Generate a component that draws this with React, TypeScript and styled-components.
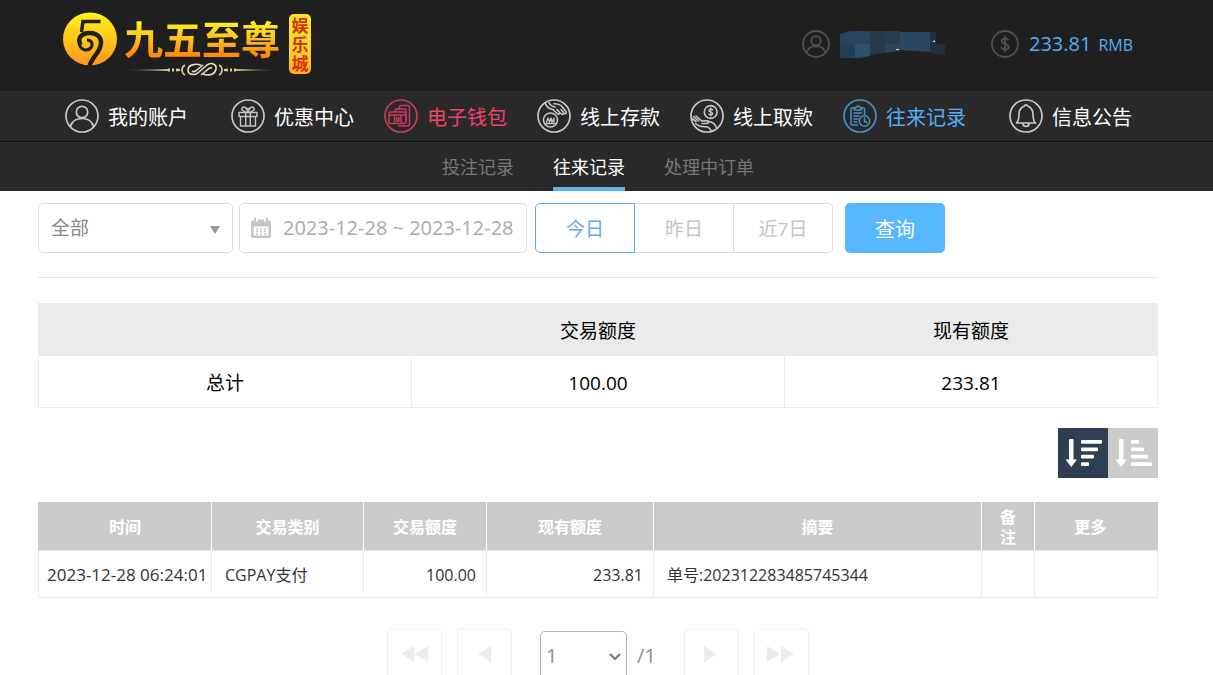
import React from "react";
import styled, { createGlobalStyle, css } from "styled-components";

const GlobalStyle = createGlobalStyle`
  html {
    scrollbar-width: none;
  }
  *, *::before, *::after {
    box-sizing: border-box;
  }
  body {
    margin: 0;
    background: #fff;
    color: #000;
    font-family: "Open Sans", "Noto Sans CJK SC", sans-serif;
    font-size: 16px;
  }
  button, input, select {
    font: inherit;
    margin: 0;
  }
`;

/* ---------- header ---------- */

const TopBar = styled.header`
  display: flex;
  align-items: center;
  justify-content: space-between;
  height: 91px;
  padding: 0 80px 0 63px;
  background: #1f1f1f;
`;

const Brand = styled.a`
  display: flex;
  align-items: flex-start;
  height: 68px;
  color: inherit;
  text-decoration: none;
`;

const BrandText = styled.div`
  display: flex;
  flex-direction: column;
  width: 160px;
  margin: 0 5px 0 7px;
`;

const BrandName = styled.span`
  font-family: "Noto Sans CJK SC", sans-serif;
  font-size: 39px;
  font-weight: 700;
  line-height: 50px;
  white-space: nowrap;
  color: transparent;
  background: linear-gradient(#fff01e 20%, #ffc81a 50%, #ff8a0c 85%);
  background-clip: text;
  -webkit-background-clip: text;
`;

const BrandBadge = styled.span`
  width: 22px;
  height: 60px;
  margin-top: 2px;
  padding: 2px;
  border-radius: 5px;
  background: linear-gradient(#ffe62e, #ffd22a 60%, #ffae20);
  color: #cf3410;
  font-size: 17px;
  font-weight: 700;
  line-height: 19px;
  text-align: center;
  word-break: break-all;
`;

const Status = styled.div`
  display: flex;
  align-items: center;
  padding-bottom: 3px;
`;

const StatusItem = styled.div`
  display: flex;
  align-items: center;
  gap: 10px;
  margin-left: 46px;
`;

const Balance = styled.span`
  color: #55adf5;
  font-size: 20px;
  line-height: 28px;

  small {
    margin-left: 7px;
    font-size: 16px;
  }
`;

/* ---------- navigation ---------- */

const NavBar = styled.nav`
  display: flex;
  align-items: center;
  justify-content: space-between;
  height: 51px;
  padding: 0 81px 0 65px;
  background: #292929;
  border-bottom: 1px solid #0e0e0e;
`;

const NavGroup = styled.div`
  display: flex;
  gap: 30px;
`;

const NavLink = styled.a<{ $color?: string; $iconColor?: string }>`
  display: flex;
  align-items: center;
  gap: 9px;
  color: ${(p) => p.$color ?? "#fff"};
  font-size: 20px;
  line-height: 30px;
  white-space: nowrap;
  text-decoration: none;

  svg {
    color: ${(p) => p.$iconColor ?? "#c8c8c8"};
  }
`;

const NavLabel = styled.span`
  padding-top: 3px;
`;

const SubNav = styled.nav`
  display: flex;
  justify-content: center;
  gap: 39px;
  height: 49px;
  padding-right: 17px;
  background: #292929;
  border-top: 1px solid #323232;
`;

const SubLink = styled.a<{ $active?: boolean }>`
  display: flex;
  align-items: center;
  padding-top: 4px;
  color: ${(p) => (p.$active ? "#fff" : "#777")};
  border-bottom: 4px solid ${(p) => (p.$active ? "#62b0f0" : "transparent")};
  font-size: 18px;
  line-height: 24px;
  text-decoration: none;
`;

/* ---------- content ---------- */

const Content = styled.main`
  padding: 12px 55px 0 38px;
`;

const Filters = styled.form`
  display: flex;
  height: 75px;
  border-bottom: 1px solid #e6e6e6;
`;

const fieldBox = css`
  height: 50px;
  border: 1px solid #dcdcdc;
  border-radius: 5px;
  background: #fff;
`;

const SelectWrap = styled.div`
  position: relative;
  width: 195px;
  height: 50px;
  margin-right: 6px;

  svg {
    position: absolute;
    right: 13px;
    top: 23px;
    pointer-events: none;
  }
`;

const TypeSelect = styled.select`
  ${fieldBox}
  width: 100%;
  padding: 0 12px;
  appearance: none;
  color: #888;
  font-size: 19px;
`;

const DateField = styled.label`
  ${fieldBox}
  display: flex;
  align-items: center;
  gap: 11px;
  width: 288px;
  margin-right: 8px;
  padding-left: 10px;
`;

const DateInput = styled.input`
  flex: 1;
  min-width: 0;
  padding: 0 0 2px;
  border: 0;
  outline: 0;
  background: none;
  color: #aaa;
  font-size: 20px;
`;

const Segments = styled.div`
  display: flex;
  margin-right: 12px;
`;

const Segment = styled.button<{ $active?: boolean }>`
  width: 99px;
  height: 50px;
  padding: 0;
  border: 1px solid ${(p) => (p.$active ? "#57aee6" : "#dcdcdc")};
  background: #fff;
  color: ${(p) => (p.$active ? "#62aeea" : "#c4c4c4")};
  font-size: 19px;

  & + & {
    border-left-width: 0;
  }
  &:first-child {
    width: 100px;
    border-radius: 5px 0 0 5px;
  }
  &:last-child {
    border-radius: 0 5px 5px 0;
  }
`;

const SubmitButton = styled.button`
  width: 100px;
  height: 50px;
  padding: 0;
  border: 0;
  border-radius: 5px;
  background: #57b7ff;
  color: #fff;
  font-size: 20px;
`;

const SummaryTable = styled.table`
  width: 100%;
  margin-top: 25px;
  border-collapse: collapse;
  table-layout: fixed;
  font-size: 19px;
  line-height: 28px;
  text-align: center;

  th, td {
    height: 52px;
    padding: 2px 0 0;
    border: 1px solid #ebebeb;
  }
  th {
    background: #ebebeb;
    font-weight: 400;
  }
`;

const SortBar = styled.div`
  display: flex;
  justify-content: flex-end;
  margin: 20px 0 24px;
`;

const SortButton = styled.button<{ $active?: boolean }>`
  display: block;
  width: 50px;
  height: 50px;
  padding: 0;
  border: 0;
  background: ${(p) => (p.$active ? "#2f3e52" : "#cbcbcb")};

  svg {
    display: block;
  }
`;

const RecordTable = styled.table`
  width: 100%;
  border-collapse: collapse;
  table-layout: fixed;
  color: #333;
  font-size: 16px;

  th {
    height: 48px;
    padding: 3px 16px 0;
    border-left: 1px solid #fff;
    background: #cbcbcb;
    color: #fff;
    font-weight: 700;
    line-height: 20px;
  }
  th:first-child {
    border-left-color: #cbcbcb;
  }
  th:last-child {
    padding-right: 28px;
  }
  td {
    height: 47px;
    padding: 2px 10px 0 13px;
    border: 1px solid #ebebeb;
    line-height: 24px;
    white-space: nowrap;
  }
  td:first-child {
    padding: 2px 0 0 8px;
    font-size: 17px;
  }
`;

const Col = styled.col<{ $width?: number }>`
  width: ${(p) => (p.$width ? `${p.$width}px` : "auto")};
`;

const AmountCell = styled.td`
  text-align: right;
`;

const Pager = styled.div`
  display: flex;
  justify-content: center;
  align-items: flex-start;
  gap: 15px;
  padding: 30px 0;
`;

const PageButton = styled.button`
  display: flex;
  align-items: center;
  justify-content: center;
  width: 55px;
  height: 52px;
  padding: 0;
  border: 1px solid #eee;
  border-radius: 5px;
  background: #fff;
  color: #ececec;
`;

const PagePicker = styled.div`
  position: relative;
  display: flex;
  align-items: center;
  gap: 10px;
  margin: 3px 13px 0;
  color: #8c8c8c;
  font-size: 20px;

  svg {
    position: absolute;
    left: 69px;
    top: 22px;
    pointer-events: none;
  }
`;

const PageSelect = styled.select`
  width: 87px;
  height: 50px;
  padding: 0 5px;
  appearance: none;
  border: 1px solid #b5b5b5;
  border-radius: 5px;
  background: #fff;
  color: #8c8c8c;
`;

/* ---------- drawings ---------- */

const LogoMark = () => (
  <svg width="54" height="56" viewBox="0 0 54 56" aria-hidden="true">
    <defs>
      <linearGradient id="gold" x1="0" y1="0" x2="0" y2="1">
        <stop offset="0" stopColor="#fff21c" />
        <stop offset="0.5" stopColor="#ffc51c" />
        <stop offset="1" stopColor="#ff9420" />
      </linearGradient>
    </defs>
    <ellipse cx="27" cy="27" rx="27" ry="26.500" fill="url(#gold)" />
    <g fill="none" stroke="#1f1f1f">
      <path d="M37.500 9.500H20L18.500 20" strokeWidth="3.500" />
      <path d="M17.500 33C14 26 18.500 21 26.500 21 35.500 21 39.500 27 37.500 34 35.500 42 29 45 26.500 54" strokeWidth="4.500" />
      <path d="M16.500 32c1 6.500 8.500 7.500 11.500 3.500 2.500-3.500 0.500-7.500-4-7.500" strokeWidth="3" />
    </g>
  </svg>
);

const Flourish = () => (
  <svg width="160" height="14" viewBox="0 0 160 14" aria-hidden="true">
    <defs>
      <linearGradient id="rule" x1="0" x2="1">
        <stop offset="0" stopColor="#c9bb84" stopOpacity="0.1" />
        <stop offset="1" stopColor="#e0d49c" />
      </linearGradient>
      <linearGradient id="ruleEnd" x1="0" x2="1">
        <stop offset="0" stopColor="#e0d49c" />
        <stop offset="1" stopColor="#c9bb84" stopOpacity="0.1" />
      </linearGradient>
    </defs>
    <path d="M0 8l46-1v2z" fill="url(#rule)" />
    <path d="M156 8l-46-1v2z" fill="url(#ruleEnd)" />
    <g fill="#d8cc9a">
      <path d="M44 6.500h2v3h-2zM48 6.500h2v3h-2zM52 6.500l4 0.500v2l-4 0.500zM110 6.500h2v3h-2zM106 6.500h2v3h-2zM104 6.500l-4 0.500v2l4 0.500z" />
    </g>
    <g fill="none" stroke="#e6e0c4" strokeWidth="1.600">
      <path d="M61 3c-4 2-4 8 0 10M95 3c4 2 4 8 0 10" stroke="#d8cc9a" />
      <path d="M77 3c-6-2-13 0-13 5s7 6 11 2l8-7c4-3 10-1 9 4-1 6-8 7-13 5" />
      <path d="M68 9c2 2 4 0 6-2l5-4M88 6c-2-1-4 1-6 3l-5 4" />
    </g>
  </svg>
);

const RoundIcon = ({ children }: { children: React.ReactNode }) => (
  <svg
    width="34"
    height="34"
    viewBox="0 0 34 34"
    fill="none"
    stroke="currentColor"
    strokeWidth="1.700"
    strokeLinecap="round"
    strokeLinejoin="round"
    aria-hidden="true"
  >
    <circle cx="17" cy="17" r="16" />
    {children}
  </svg>
);

const StatusIcon = ({ children }: { children: React.ReactNode }) => (
  <svg
    width="28"
    height="28"
    viewBox="0 0 34 34"
    fill="none"
    stroke="#505050"
    strokeWidth="2.200"
    aria-hidden="true"
  >
    <circle cx="17" cy="17" r="15.800" />
    {children}
  </svg>
);

const userPaths = (
  <>
    <circle cx="17" cy="13" r="5.700" />
    <path d="M5.500 27.500C7 22 11.500 19.500 17 19.500S27 22 28.500 27.500" />
  </>
);

const giftPaths = (
  <g strokeWidth="1.400">
    <path d="M8 13.500h18v4H8zM9.500 17.500h15V27h-15zM14.700 13.500V27M19.300 13.500V27" />
    <path d="M17 13.500C12 13 9.500 10.500 11.500 8.500 13.500 7 16.500 9.500 17 13.500 17.500 9.500 20.500 7 22.500 8.500 24.500 10.500 22 13 17 13.500z" />
    <path d="M15.500 9.500h3" />
  </g>
);

const walletPaths = (
  <g strokeWidth="1.500">
    <path d="M11.500 12.500V10h4V8a1.500 1.500 0 0 1 1.500-1.500h7A1.500 1.500 0 0 1 25.500 8v17.500A1.500 1.500 0 0 1 24 27h-9.500" />
    <path d="M14.500 10H21a1 1 0 0 1 1 1v12.500" />
    <path d="M6.500 13H20a2 2 0 0 1 2 2v7.500a2 2 0 0 1-2 2H6.500A1.500 1.500 0 0 1 5 23v-8.500A1.500 1.500 0 0 1 6.500 13zM5 16h17M10.500 16v8.500M17 16v8.500" />
    <path d="M12.500 19h2.500v3h-2.500z" />
  </g>
);

const depositPaths = (
  <g strokeWidth="1.600">
    <circle cx="13.500" cy="21" r="7" />
    <path d="M9.500 23l1.500-4 1.500 4 1.500-4 1 4 2-4v4M9 24.500h9" strokeWidth="1.300" />
    <path d="M8.500 4.500c1 3.500 4 5.500 7.500 6l4 4c1.500 1.500 3.500 0 2-1.800l-2-2.200M22 13l2.500 2c1.500 1 3-0.500 1.800-2L24 10.500M26.500 14c2 1.200 3.500 0.500 2.500-1.500L25 7.500c-2-2.500-5-2.500-8-2.800" />
    <path d="M12 3.500c1 2.500 3 4 6 4.500" />
  </g>
);

const withdrawPaths = (
  <g strokeWidth="1.600">
    <circle cx="20.700" cy="13" r="6.400" />
    <path d="M22.700 10.800c-0.600-0.800-3.800-1-3.800 0.700s3.800 1 3.800 2.900-3.200 1.700-4 0.700M20.800 9v8" strokeWidth="1.300" />
    <path d="M2 19.500l4 3M3.500 17.500l5 4.500M6 17l5 4.500c2 1.500 5-0.500 7 0.500 1.500 1 0 2.500-2 2.500h-4" />
    <path d="M5.500 24.500c3 3.500 8 3 12 3.500 2 0.500 3 2 4 4M19 22.500c3 0.500 6 2.500 7.500 6" />
  </g>
);

const recordPaths = (
  <g strokeWidth="1.500">
    <path d="M14.500 26H9a1 1 0 0 1-1-1V10a1 1 0 0 1 1-1h2.500M18 9h2.500a1 1 0 0 1 1 1v6" />
    <path d="M11.500 11V8.500h2c0-2 3-2 3 0h2V11z" />
    <path d="M11 14h7.500M11 17h5M11 20h4M11 23h3" />
    <circle cx="21.500" cy="22" r="5.200" />
    <path d="M21.500 19v3.500l2.500 1" />
  </g>
);

const bellPaths = (
  <>
    <path d="M7.500 24c2.500-2 2.500-5 2.500-9 0-4 2-6.500 5.300-8a1.800 1.800 0 0 1 3.400 0c3.300 1.500 5.300 4 5.300 8 0 4 0 7 2.500 9z" />
    <path d="M14 24.500c0 4 6 4 6 0" />
  </>
);

const dollarPaths = (
  <path d="M21.500 12.500c-1-2.500-8.500-3-8.500 1s8.500 2.500 8.500 7-8 4-9 0.500M17 7v20" />
);

const MaskedName = () => (
  <svg width="105" height="28" viewBox="0 0 105 28" role="img" aria-label="用户名">
    <path d="M0 4L10 1H30V14H0z" fill="#294358" />
    <path d="M0 14H15V28H0z" fill="#243e55" />
    <path d="M15 14H30V26L20 28H15z" fill="#2c506c" />
    <path d="M30 1H45V23L30 25z" fill="#26394a" />
    <path d="M45 1H60V14H45z" fill="#273d4e" />
    <path d="M45 14H60V21L45 23z" fill="#2a4559" />
    <path d="M60 2H90V22L60 20z" fill="#29475f" />
    <path d="M90 2H96V14H105V25L90 23z" fill="#22303b" />
    <path d="M92 12l3-2v2zM56 19h3v1h-3z" fill="#b9d5e8" />
  </svg>
);

const CalendarIcon = () => (
  <svg width="22" height="22" viewBox="0 0 22 22" aria-hidden="true">
    <path
      d="M2.500 3.500H4V1.500a1 1 0 0 1 2 0v3h2v-2h6v2h2v-3a1 1 0 0 1 2 0v2h1.500A1.500 1.500 0 0 1 21 5v14a2 2 0 0 1-2 2H3a2 2 0 0 1-2-2V5a1.500 1.500 0 0 1 1.500-1.500zM3.500 9.500V18.500h15V9.500z"
      fill="#c6c6c6"
    />
    <path
      d="M6 12h2M10 12h2M14 12h2M6 14.500h2M10 14.500h2M14 14.500h2M6 17h2M10 17h2M14 17h2"
      stroke="#c6c6c6"
      strokeWidth="1.500"
    />
  </svg>
);

const SortIcon = ({ bars }: { bars: number[] }) => (
  <svg width="50" height="50" viewBox="0 0 50 50" fill="#fff" aria-hidden="true">
    <path d="M11 12a1 1 0 0 1 1-1h2.500a1 1 0 0 1 1 1v19.500h3.500L13.200 39 7.500 31.500H11z" />
    {bars.map((w, i) => (
      <rect key={i} x="23" y={12 + i * 7.4} width={w} height="3.800" rx="1" />
    ))}
  </svg>
);

const Triangles = ({ count, flip }: { count: number; flip?: boolean }) => (
  <svg
    width={count * 14}
    height="18"
    viewBox={`0 0 ${count * 14} 18`}
    fill="currentColor"
    aria-hidden="true"
  >
    {Array.from({ length: count }, (_, i) => (
      <path
        key={i}
        d={flip ? `M${i * 14} 1l13 8-13 8z` : `M${i * 14 + 13} 1l-13 8 13 8z`}
      />
    ))}
  </svg>
);

/* ---------- data ---------- */

const walletLinks = [
  { label: "优惠中心", icon: giftPaths },
  { label: "电子钱包", icon: walletPaths, color: "#ee4266", iconColor: "#c83a5a" },
  { label: "线上存款", icon: depositPaths },
  { label: "线上取款", icon: withdrawPaths },
  { label: "往来记录", icon: recordPaths, color: "#55adf5", iconColor: "#4a8fc4" },
];

const columns = [
  { label: "时间", width: 173 },
  { label: "交易类别", width: 152 },
  { label: "交易额度", width: 123 },
  { label: "现有额度", width: 167 },
  { label: "摘要" },
  { label: "备注", width: 53 },
  { label: "更多", width: 123 },
];

export default function App() {
  return (
    <>
      <GlobalStyle />
      <TopBar>
        <Brand href="#">
          <LogoMark />
          <BrandText>
            <BrandName>九五至尊</BrandName>
            <Flourish />
          </BrandText>
          <BrandBadge>娱乐城</BrandBadge>
        </Brand>
        <Status>
          <StatusItem>
            <StatusIcon>{userPaths}</StatusIcon>
            <MaskedName />
          </StatusItem>
          <StatusItem>
            <StatusIcon>{dollarPaths}</StatusIcon>
            <Balance>
              233.81<small>RMB</small>
            </Balance>
          </StatusItem>
        </Status>
      </TopBar>

      <NavBar>
        <NavLink href="#">
          <RoundIcon>{userPaths}</RoundIcon>
          <NavLabel>我的账户</NavLabel>
        </NavLink>
        <NavGroup>
          {walletLinks.map((l) => (
            <NavLink key={l.label} href="#" $color={l.color} $iconColor={l.iconColor}>
              <RoundIcon>{l.icon}</RoundIcon>
              <NavLabel>{l.label}</NavLabel>
            </NavLink>
          ))}
        </NavGroup>
        <NavLink href="#">
          <RoundIcon>{bellPaths}</RoundIcon>
          <NavLabel>信息公告</NavLabel>
        </NavLink>
      </NavBar>
      <SubNav>
        <SubLink href="#">投注记录</SubLink>
        <SubLink href="#" $active>
          往来记录
        </SubLink>
        <SubLink href="#">处理中订单</SubLink>
      </SubNav>

      <Content>
        <Filters onSubmit={(e) => e.preventDefault()}>
          <SelectWrap>
            <TypeSelect aria-label="交易类别">
              <option>全部</option>
            </TypeSelect>
            <svg width="10" height="8" viewBox="0 0 10 8" aria-hidden="true">
              <path d="M0 0h10L5 8z" fill="#999" />
            </svg>
          </SelectWrap>
          <DateField>
            <CalendarIcon />
            <DateInput
              type="text"
              aria-label="日期"
              defaultValue="2023-12-28 ~ 2023-12-28"
            />
          </DateField>
          <Segments>
            <Segment type="button" $active>
              今日
            </Segment>
            <Segment type="button">昨日</Segment>
            <Segment type="button">近7日</Segment>
          </Segments>
          <SubmitButton type="submit">查询</SubmitButton>
        </Filters>

        <SummaryTable>
          <thead>
            <tr>
              <th />
              <th scope="col">交易额度</th>
              <th scope="col">现有额度</th>
            </tr>
          </thead>
          <tbody>
            <tr>
              <td>总计</td>
              <td>100.00</td>
              <td>233.81</td>
            </tr>
          </tbody>
        </SummaryTable>

        <SortBar>
          <SortButton type="button" $active aria-label="降序">
            <SortIcon bars={[21, 17, 13, 8]} />
          </SortButton>
          <SortButton type="button" aria-label="升序">
            <SortIcon bars={[8, 13, 17, 21]} />
          </SortButton>
        </SortBar>

        <RecordTable>
          <colgroup>
            {columns.map((c) => (
              <Col key={c.label} $width={c.width} />
            ))}
          </colgroup>
          <thead>
            <tr>
              {columns.map((c) => (
                <th key={c.label} scope="col">
                  {c.label}
                </th>
              ))}
            </tr>
          </thead>
          <tbody>
            <tr>
              <td>2023-12-28 06:24:01</td>
              <td>CGPAY支付</td>
              <AmountCell>100.00</AmountCell>
              <AmountCell>233.81</AmountCell>
              <td>单号:202312283485745344</td>
              <td />
              <td />
            </tr>
          </tbody>
        </RecordTable>

        <Pager>
          <PageButton type="button" aria-label="首页">
            <Triangles count={2} />
          </PageButton>
          <PageButton type="button" aria-label="上一页">
            <Triangles count={1} />
          </PageButton>
          <PagePicker>
            <PageSelect aria-label="页码">
              <option>1</option>
            </PageSelect>
            <svg width="12" height="8" viewBox="0 0 12 8" fill="none" stroke="#777" strokeWidth="2" aria-hidden="true">
              <path d="M1 1l5 5 5-5" />
            </svg>
            /1
          </PagePicker>
          <PageButton type="button" aria-label="下一页">
            <Triangles count={1} flip />
          </PageButton>
          <PageButton type="button" aria-label="末页">
            <Triangles count={2} flip />
          </PageButton>
        </Pager>
      </Content>
    </>
  );
}
